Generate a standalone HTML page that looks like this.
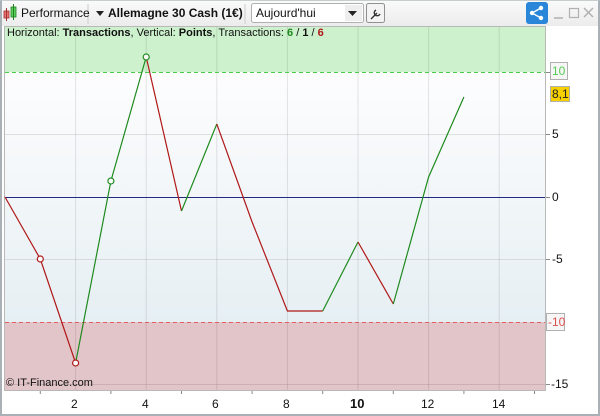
<!DOCTYPE html>
<html><head><style>
body{margin:0;width:600px;height:416px;overflow:hidden;font-family:"Liberation Sans",sans-serif;background:#fff}
.t{position:absolute;font-size:12px;white-space:nowrap}
</style></head><body>
<div style="position:absolute;left:0;top:0;width:600px;height:416px;box-sizing:border-box;border:2px solid #a9b1b6;border-top:1px solid #c8cdd0;background:#fff"></div>
<div style="position:absolute;left:2px;top:1px;width:596px;height:25px;background:linear-gradient(#fafafa,#ececec)"></div>
<svg style="position:absolute;left:0;top:0" width="600" height="416">
<!-- toolbar icons -->
<rect x="4" y="11" width="5" height="7" fill="#e87070" stroke="#a03030" stroke-width="0.8"/>
<line x1="6.5" y1="8" x2="6.5" y2="21" stroke="#a03030"/>
<rect x="11" y="7" width="5" height="10" fill="#5ad05a" stroke="#208020" stroke-width="0.8"/>
<line x1="13.5" y1="4" x2="13.5" y2="20" stroke="#208020"/>
<line x1="88" y1="4" x2="88" y2="24" stroke="#ccc"/>
<polygon points="96,11 104,11 100,16" fill="#222"/>
<line x1="245" y1="4" x2="245" y2="24" stroke="#ccc"/>
<rect x="251.5" y="3.5" width="112" height="19" rx="2" fill="#fff" stroke="#b0b0b0"/>
<rect x="345" y="5" width="17" height="16" fill="#eee"/>
<polygon points="305,0 305,0 305,0" fill="#222"/>
<polygon points="348,11 357,11 352.5,16" fill="#222"/>
<rect x="366.5" y="3.5" width="18" height="19" rx="2" fill="#f4f4f4" stroke="#909090"/>
<path d="M371,19 L377,13 M376,10 a3,3 0 1 0 4,4" stroke="#333" stroke-width="1.4" fill="none"/>
<rect x="526" y="2" width="22" height="22" rx="3" fill="#2a86d8"/>
<circle cx="532" cy="13" r="2.2" fill="#fff"/><circle cx="541" cy="8" r="2.2" fill="#fff"/><circle cx="541" cy="18" r="2.2" fill="#fff"/>
<path d="M532,13 L541,8 M532,13 L541,18" stroke="#fff" stroke-width="1.4"/>
<line x1="554" y1="18" x2="563" y2="18" stroke="#b0b0b0" stroke-width="1.5"/>
<rect x="569.5" y="8.5" width="9" height="9" fill="none" stroke="#b0b0b0" stroke-width="1.2"/>
<path d="M584,8 L593,17 M593,8 L584,17" stroke="#b0b0b0" stroke-width="1.5"/>
<!-- plot -->
<defs><linearGradient id="g" x1="0" y1="0" x2="0" y2="1"><stop offset="0" stop-color="#fdfdfe"/><stop offset="1" stop-color="#e6eff3"/></linearGradient></defs>
<rect x="5" y="72" width="540" height="250" fill="url(#g)"/>
<rect x="5" y="27" width="540" height="45" fill="#cdf1cd"/>
<rect x="5" y="322" width="540" height="68" fill="#e2c5c8"/>
<rect x="4.5" y="26.5" width="541" height="364" fill="none" stroke="#b8b8b8"/>
<g stroke="#000" stroke-opacity="0.1">
<line x1="75.6" y1="27" x2="75.6" y2="390"/><line x1="146.2" y1="27" x2="146.2" y2="390"/><line x1="216.8" y1="27" x2="216.8" y2="390"/><line x1="287.4" y1="27" x2="287.4" y2="390"/><line x1="358" y1="27" x2="358" y2="390"/><line x1="428.6" y1="27" x2="428.6" y2="390"/><line x1="499.2" y1="27" x2="499.2" y2="390"/>
<line x1="5" y1="134.5" x2="545" y2="134.5"/><line x1="5" y1="259.5" x2="545" y2="259.5"/><line x1="5" y1="384.5" x2="545" y2="384.5"/>
</g>
<line x1="5" y1="72.5" x2="545" y2="72.5" stroke="#4ccc4c" stroke-dasharray="4,3"/>
<line x1="5" y1="322.5" x2="545" y2="322.5" stroke="#e06060" stroke-dasharray="4,3"/>
<line x1="5" y1="197.5" x2="545" y2="197.5" stroke="#222a80"/>
<g fill="none" stroke-width="1.2">
<polyline stroke="#b01818" points="5,197 40.3,259 75.6,363"/>
<polyline stroke="#1f8a1f" points="75.6,363 110.9,181 146.2,57"/>
<polyline stroke="#b01818" points="146.2,57 181.5,211"/>
<polyline stroke="#1f8a1f" points="181.5,211 216.8,124"/>
<polyline stroke="#b01818" points="216.8,124 252.1,222 287.4,311 322.7,311"/>
<polyline stroke="#1f8a1f" points="322.7,311 358,242"/>
<polyline stroke="#b01818" points="358,242 393.3,304"/>
<polyline stroke="#1f8a1f" points="393.3,304 428.6,177 463.9,97"/>
</g>
<g fill="#fff" stroke-width="1.2">
<circle cx="40.3" cy="259" r="3" stroke="#b01818"/><circle cx="75.6" cy="363" r="3" stroke="#b01818"/>
<circle cx="110.9" cy="181" r="3" stroke="#1f8a1f"/><circle cx="146.2" cy="57" r="3" stroke="#1f8a1f"/>
</g>
<!-- right axis -->
<g stroke="#888"><line x1="546" y1="72.5" x2="550" y2="72.5"/><line x1="546" y1="134.5" x2="550" y2="134.5"/><line x1="546" y1="197.5" x2="550" y2="197.5"/><line x1="546" y1="259.5" x2="550" y2="259.5"/><line x1="546" y1="322.5" x2="550" y2="322.5"/><line x1="546" y1="384.5" x2="550" y2="384.5"/></g>
<rect x="550.5" y="62.5" width="17" height="17" fill="#f6f6f6" stroke="#b0b0b0"/>
<rect x="550.5" y="86.5" width="19" height="15" fill="#f7d000" stroke="#b0b0b0"/>
<rect x="546.5" y="313.5" width="18" height="17" fill="#f6f6f6" stroke="#b0b0b0"/>
<!-- bottom ticks -->
<g stroke="#888"><line x1="40.3" y1="391" x2="40.3" y2="394"/><line x1="110.9" y1="391" x2="110.9" y2="394"/><line x1="181.5" y1="391" x2="181.5" y2="394"/><line x1="252.1" y1="391" x2="252.1" y2="394"/><line x1="322.7" y1="391" x2="322.7" y2="394"/><line x1="393.3" y1="391" x2="393.3" y2="394"/><line x1="463.9" y1="391" x2="463.9" y2="394"/><line x1="534.5" y1="391" x2="534.5" y2="394"/></g>
</svg>
<div class="t" style="left:21px;top:6px;color:#111">Performance</div>
<div class="t" style="left:108px;top:6px;font-weight:bold;color:#111">Allemagne 30 Cash (1€)</div>
<div class="t" style="left:256px;top:6px;color:#111">Aujourd'hui</div>
<div class="t" style="left:7px;top:27px;font-size:11px;color:#111">Horizontal: <b>Transactions</b>, Vertical: <b>Points</b>, Transactions: <b style="color:#1f8a1f">6</b> / <b>1</b> / <b style="color:#b01818">6</b></div>
<div class="t" style="left:552px;top:64px;color:#55cc55;font-size:12px">10</div>
<div class="t" style="left:552px;top:87px;color:#222">8,1</div>
<div class="t" style="left:552px;top:127px;color:#111">5</div>
<div class="t" style="left:552px;top:190px;color:#111">0</div>
<div class="t" style="left:552px;top:252px;color:#111">-5</div>
<div class="t" style="left:548px;top:315px;color:#e05050">-10</div>
<div class="t" style="left:551px;top:377px;color:#111">-15</div>
<div class="t" style="left:6px;top:377px;font-size:11px;color:#111">© IT-Finance.com</div>
<div class="t" style="left:71px;top:397px;color:#111">2</div>
<div class="t" style="left:142px;top:397px;color:#111">4</div>
<div class="t" style="left:212px;top:397px;color:#111">6</div>
<div class="t" style="left:283px;top:397px;color:#111">8</div>
<div class="t" style="left:350px;top:396px;color:#111;font-weight:bold;font-size:13px">10</div>
<div class="t" style="left:421px;top:397px;color:#111">12</div>
<div class="t" style="left:492px;top:397px;color:#111">14</div>
</body></html>
